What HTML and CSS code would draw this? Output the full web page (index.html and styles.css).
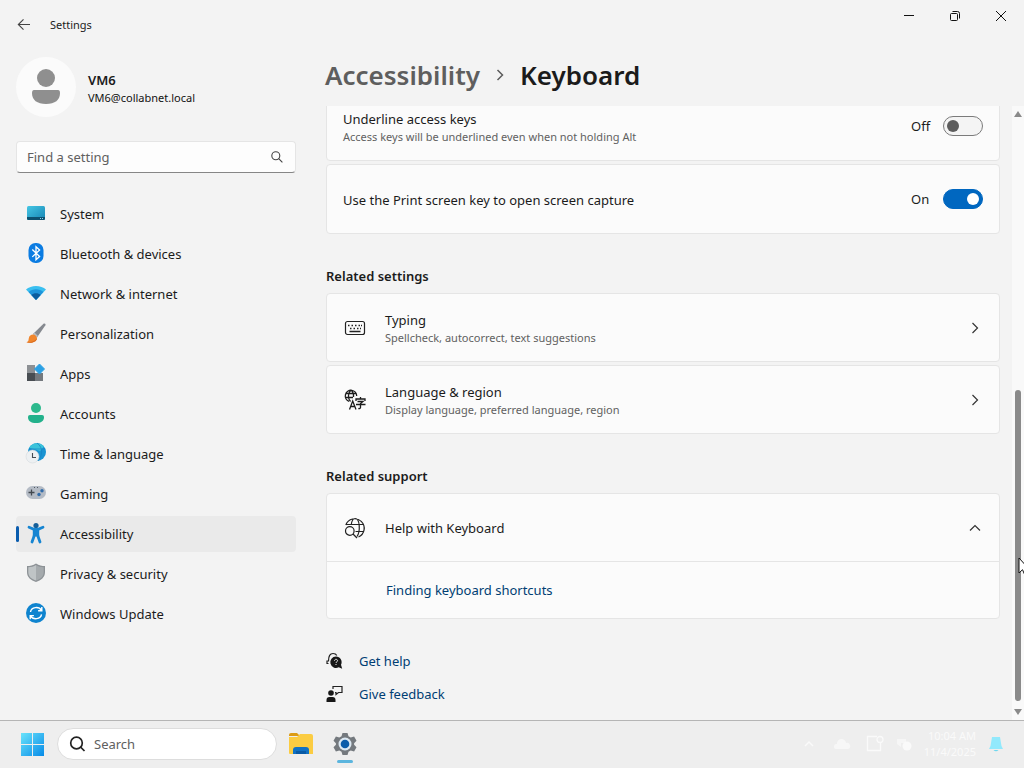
FILE: index.html
```html
<!DOCTYPE html>
<html lang="en">
<head>
<meta charset="utf-8">
<meta name="viewport" content="width=device-width, initial-scale=1">
<title>Settings</title>
<link rel="stylesheet" href="styles.css">
</head>
<body class="desktop">
<div class="window">
  <aside class="sidebar">
    <header class="titlebar">
      <button class="back" type="button" aria-label="Back">
        <svg width="14" height="14" viewBox="0 0 14 14" fill="none" stroke="#444" stroke-width="1.1"><path d="M13 6.500H1.500M6.500 1.300L1.300 6.500l5.200 5.200"/></svg>
      </button>
      <span class="app-name">Settings</span>
    </header>
    <a class="profile" href="#profile">
      <svg class="avatar" viewBox="0 0 60 60"><circle cx="30" cy="30" r="30" fill="#fbfbfb"/><circle cx="30" cy="21" r="9" fill="#8f8f8f"/><path d="M18 33h24q2 0 2 3c0 7-5 11-14 11s-14-4-14-11q0-3 2-3z" fill="#8f8f8f"/></svg>
      <span class="profile-text"><strong class="profile-name">VM6</strong><span class="profile-mail">VM6@collabnet.local</span></span>
    </a>
    <form class="find">
      <input class="find-input" type="text" aria-label="Find a setting" placeholder="Find a setting">
      <svg width="12" height="12" viewBox="0 0 12 12" fill="none" stroke="#444" stroke-width="1.1"><circle cx="4.8" cy="4.8" r="4"/><path d="M7.700 7.700l3.700 3.700"/></svg>
    </form>
    <nav class="nav">
      <a class="nav-item" href="#system"><svg class="nav-icon" viewBox="0 0 20 20"><defs><linearGradient id="sys" x1="0" y1="0" x2="1" y2="1"><stop offset="0" stop-color="#45c6e4"/><stop offset="1" stop-color="#1685b4"/></linearGradient></defs><rect x="1" y="2" width="18" height="14" rx="1.500" fill="url(#sys)"/><path d="M1 13h18v1.500a1.500 1.500 0 0 1-1.500 1.500h-15A1.500 1.500 0 0 1 1 14.500z" fill="#0d5170"/><path d="M14 14.500h1m1 0h1" stroke="#8ed5ef"/></svg>System</a>
      <a class="nav-item" href="#bluetooth"><svg class="nav-icon" viewBox="0 0 20 20"><rect x="2.500" y="-1" width="15" height="20" rx="7" fill="#0b7ce2"/><path d="M6.300 5.500l7.300 7L10 15.700v-13l3.600 3.200-7.300 7" fill="none" stroke="#fff" stroke-width="1.300"/></svg>Bluetooth &amp; devices</a>
      <a class="nav-item" href="#network"><svg class="nav-icon" viewBox="0 0 20 20"><path d="M0 5.500C5 .8 15 .8 20 5.500L10 16z" fill="#39bff0"/><path d="M2.600 8.100c4-3.800 10.800-3.800 14.800 0L10 16z" fill="#1e94db"/><path d="M5.300 11c2.500-2.300 6.900-2.300 9.400 0L10 16z" fill="#0b5c9e"/></svg>Network &amp; internet</a>
      <a class="nav-item" href="#personalization"><svg class="nav-icon" viewBox="0 0 20 20"><path d="M7 10L17.500-.3c1.300-.8 2.500.1 1.900 1.500L11 13.500z" fill="#85898f"/><path d="M7 10l1.500-1.400 3.500 3.400-1 1.500z" fill="#b7bcc2"/><path d="M7 10.500c2 .1 4 1.900 4 3.700 0 3.500-6 5.800-10.500 4 2.300-.9 1.900-2 2.300-4 .4-2.400 2.200-3.700 4.200-3.700z" fill="#f0862d"/><path d="M.5 18.200c4.500 1.800 10.500-.5 10.500-4-2 3-5 3.800-10.500 4z" fill="#d96a1e"/></svg>Personalization</a>
      <a class="nav-item" href="#apps"><svg class="nav-icon" viewBox="0 0 20 20"><path d="M1 1h8v8H1z" fill="#8c9094"/><path d="M1 9h8v8H1z" fill="#484d52"/><path d="M9 9h8v8H9z" fill="#74797e"/><path d="M13.500 0l5 5-5 5-5-5z" fill="#2ba0e4" stroke="#2ba0e4" stroke-linejoin="round"/></svg>Apps</a>
      <a class="nav-item" href="#accounts"><svg class="nav-icon" viewBox="0 0 20 20"><circle cx="10" cy="4" r="5" fill="#2cb98d"/><path d="M4 11h12a2 2 0 0 1 2 2c0 4-3 6-8 6s-8-2-8-6a2 2 0 0 1 2-2z" fill="#22b18b"/></svg>Accounts</a>
      <a class="nav-item" href="#time"><svg class="nav-icon" viewBox="0 0 20 20"><circle cx="11" cy="8" r="9" fill="#1a94d2"/><path d="M3 4C6-2 14-2 18 2.500L14 7 8 5z" fill="#3bc3da"/><path d="M11-1c7 5 5 13 1 18M3 5h16" fill="none" stroke="#1583c4" stroke-width=".7"/><circle cx="6.500" cy="12.500" r="6.500" fill="#edf0f2" stroke="#cfd4d8" stroke-width=".5"/><path d="M6.500 9v4.500H10" fill="none" stroke="#454b52" stroke-width="1.100"/></svg>Time &amp; language</a>
      <a class="nav-item" href="#gaming"><svg class="nav-icon" viewBox="0 0 20 20"><rect y="2" width="20" height="13" rx="6.500" fill="#b4bbc5"/><path d="M5.500 5.500v6M2.500 8.500h6" stroke="#42484f" stroke-width="1.300"/><circle cx="13" cy="10.500" r="1.700" fill="#326caa"/><circle cx="16" cy="6.800" r="1.700" fill="#326caa"/><path d="M8 3.500h1m2 0h1" stroke="#535a62"/></svg>Gaming</a>
      <a class="nav-item nav-item-active" href="#accessibility" aria-current="page"><svg class="nav-icon" viewBox="0 0 20 20"><circle cx="10" cy="1.500" r="2.600" fill="#155f99"/><path d="M3 3.300l5 2h4l5-2M8.500 11L6 18M11.500 11l2.500 7" fill="none" stroke="#1685d2" stroke-width="2.800" stroke-linecap="round"/><path d="M6.800 5h6.400v7.500H6.800z" fill="#1685d2"/></svg>Accessibility</a>
      <a class="nav-item" href="#privacy"><svg class="nav-icon" viewBox="0 0 20 20"><path d="M10-.5C7 1.500 4 2 1 2v6c0 5.500 4 8.200 9 10 5-1.800 9-4.500 9-10V2c-3 0-6-.5-9-2.500z" fill="#8d9296"/><path d="M10 1C8 2.500 5 3.200 2.300 3.200V8c0 5 3.700 7.200 7.700 8.600z" fill="#bfc4c6"/><path d="M10 1c2 1.500 5 2.200 7.700 2.200V8c0 5-3.700 7.200-7.700 8.600z" fill="#a5aaad"/></svg>Privacy &amp; security</a>
      <a class="nav-item" href="#update"><svg class="nav-icon" viewBox="0 0 20 20"><circle cx="10" cy="9" r="10" fill="#0f84cf"/><path d="M4.500 8c.8-5 8.200-6 11-1.700M15.800 3v3.700h-3.700M15.500 10.300c-.8 5-8.200 6-11 1.700M4.200 15.300v-3.700h3.700" fill="none" stroke="#fff" stroke-width="1.400"/></svg>Windows Update</a>
    </nav>
  </aside>

  <main class="main">
    <div class="window-controls">
      <button class="window-button" type="button" aria-label="Minimize"><svg width="12" height="12" viewBox="0 0 12 12"><path d="M1 5.500h10" stroke="#111"/></svg></button>
      <button class="window-button" type="button" aria-label="Restore"><svg width="12" height="12" viewBox="0 0 12 12" fill="none" stroke="#111"><rect x="1.500" y="3.500" width="7" height="7" rx="1"/><path d="M3.500 1.500h5a2 2 0 0 1 2 2v5"/></svg></button>
      <button class="window-button" type="button" aria-label="Close"><svg width="12" height="12" viewBox="0 0 12 12"><path d="M1 1l10 10M11 1L1 11" stroke="#111"/></svg></button>
    </div>
    <h1 class="breadcrumb">
      <a class="crumb" href="#accessibility">Accessibility</a>
      <svg width="8" height="12" viewBox="0 0 8 12" fill="none" stroke="#5c5c5c" stroke-width="1.500"><path d="M1.500 1l5 5-5 5"/></svg>
      <span>Keyboard</span>
    </h1>
    <div class="viewport">
      <div class="content">
        <div class="card card-setting card-clipped">
          <label class="text" for="underline"><span>Underline access keys</span><small class="note">Access keys will be underlined even when not holding Alt</small></label>
          <span class="state">Off</span><input class="toggle" id="underline" type="checkbox" role="switch">
        </div>
        <div class="card card-setting">
          <label class="text" for="printscreen">Use the Print screen key to open screen capture</label>
          <span class="state">On</span><input class="toggle" id="printscreen" type="checkbox" role="switch" checked>
        </div>

        <h2 class="section-title">Related settings</h2>
        <a class="card" href="#typing">
          <svg class="card-icon" width="22" height="22" viewBox="0 0 22 22" fill="none" stroke="#222"><rect x="1.500" y="4.500" width="19" height="13" rx="2" stroke-width="1.200"/><path d="M4 8.500h1.500m2 0H9m2 0h1.500m2 0H16m1 0h1M6 11.500h1.500m2 0H11m2 0h1.500m1.500 0h1M5.500 14.500h11" stroke-width="1.300"/></svg>
          <span class="text"><span>Typing</span><small class="note">Spellcheck, autocorrect, text suggestions</small></span>
          <svg class="chevron" width="16" height="16" viewBox="0 0 16 16" fill="none" stroke="#333" stroke-width="1.200"><path d="M5.500 3l5 5-5 5"/></svg>
        </a>
        <a class="card" href="#language">
          <svg class="card-icon" width="22" height="22" viewBox="0 0 22 22" fill="none" stroke="#1c1c1c" stroke-width="1.300"><path d="M5 12.300A5.700 5.700 0 1 1 12.700 7M1.500 4.500h11M1.200 8.500H9M7 1c-3.300 3-3.300 8.500-.5 11.500M7 1c2.300 2 2.700 4.500 2.500 7"/><path d="M5.500 20.500L8.700 12l3.300 8.500M6.500 17.500h4.500M16.500 8v2M12 12v-2h9v2M13.500 12.500H19l-2.500 2v4q0 1.200-2.200 1M12 15.500h9.500"/></svg>
          <span class="text"><span>Language &amp; region</span><small class="note">Display language, preferred language, region</small></span>
          <svg class="chevron" width="16" height="16" viewBox="0 0 16 16" fill="none" stroke="#333" stroke-width="1.200"><path d="M5.500 3l5 5-5 5"/></svg>
        </a>

        <h2 class="section-title">Related support</h2>
        <section class="expander">
          <button class="card card-head" type="button" aria-expanded="true">
            <svg class="card-icon" width="22" height="22" viewBox="0 0 22 22" fill="none" stroke="#222" stroke-width="1.200"><path d="M1.800 8a9.500 9.500 0 1 1 12.700 12M2.500 7.500h17.500M11.500 14.500h8.500M7.200 8C7.700 4 9.300 1.500 11.200 1.500c4.800 0 5.300 13 1.800 18"/><circle cx="5.800" cy="14" r="4.300"/><path d="M9 17l4 4"/></svg>
            <span class="text">Help with Keyboard</span>
            <svg class="chevron" width="16" height="16" viewBox="0 0 16 16" fill="none" stroke="#333" stroke-width="1.200"><path d="M3 10.500l5-5 5 5"/></svg>
          </button>
          <div class="expander-body"><a class="link" href="#shortcuts">Finding keyboard shortcuts</a></div>
        </section>

        <div class="help-links">
          <a class="link help-link" href="#help"><svg width="18" height="18" viewBox="0 0 18 18"><path d="M2.500 11.500H1V9h1.500C2.500 4 4 1.500 7 1.500c2 0 3.300 1 3.800 2" fill="none" stroke="#222" stroke-width="1.200"/><path d="M10 4.500a5.700 5.700 0 1 0 2.700 10.700l3.500 1.500-1.200-3.900A5.700 5.700 0 0 0 10 4.500z" fill="#171717"/><path d="M8.500 8.700c.2-2 3.200-1.700 3 .1-.1 1.100-1.500 1.100-1.500 2.200m0 1v1" fill="none" stroke="#eee"/></svg>Get help</a>
          <a class="link help-link" href="#feedback"><svg width="18" height="18" viewBox="0 0 18 18"><circle cx="5" cy="8" r="2.800" fill="#171717"/><path d="M.5 17v-2a3 3 0 0 1 3-3h3a3 3 0 0 1 3 3v2z" fill="#171717"/><path d="M7 4V1.500h9v6h-3.500l-2.500 2v-2H9" fill="none" stroke="#222" stroke-width="1.200"/></svg>Give feedback</a>
        </div>
      </div>
      <div class="scrollbar" aria-hidden="true">
        <svg width="8" height="6" viewBox="0 0 8 6"><path d="M4 0l4 6H0z" fill="#8a8a8a"/></svg>
        <div class="track"><div class="thumb"></div></div>
        <svg width="8" height="6" viewBox="0 0 8 6"><path d="M0 0h8L4 6z" fill="#8a8a8a"/></svg>
      </div>
    </div>
  </main>
</div>

<footer class="taskbar">
  <button class="task-button" type="button" aria-label="Start"><svg width="24" height="24" viewBox="0 0 24 24"><defs><linearGradient id="win" x1="0" y1="0" x2="1" y2="1"><stop offset="0" stop-color="#69e3fb"/><stop offset="1" stop-color="#078be8"/></linearGradient></defs><path d="M0 1h11v11H0zM12 1h11v11H12zM0 13h11v11H0zM12 13h11v11H12z" fill="url(#win)"/></svg></button>
  <label class="task-search"><svg width="16" height="16" viewBox="0 0 16 16" fill="none" stroke="#222" stroke-width="1.700"><circle cx="6.500" cy="7" r="5.800"/><path d="M10.500 11l4 4"/></svg><input class="task-input" type="text" aria-label="Search" placeholder="Search"></label>
  <button class="task-button" type="button" aria-label="File Explorer"><svg width="24" height="24" viewBox="0 0 24 24"><path d="M0 3a2 2 0 0 1 2-2h6l3 3H0z" fill="#dc9b14"/><path d="M0 5h8l3-3h11a2 2 0 0 1 2 2v18H1a1 1 0 0 1-1-1z" fill="#fbcc42"/><path d="M4 22v-4a3 3 0 0 1 3-3h10a3 3 0 0 1 3 3v4z" fill="#1172c4"/><path d="M7 22v-3h10v3z" fill="#0a5ba6"/></svg></button>
  <button class="task-button task-button-open" type="button" aria-label="Settings"><svg width="24" height="24" viewBox="0 0 24 24"><path d="M9.500 1h5l1 3.300 2.200 1.300 3.400-1 2.400 4.200-2.400 2.500v1.400l2.400 2.500-2.400 4.200-3.400-1-2.200 1.300-1 3.300h-5l-1-3.300-2.200-1.300-3.400 1L.5 15.200l2.400-2.500v-1.400L.5 8.800l2.400-4.200 3.400 1 2.200-1.300z" fill="#74797e"/><circle cx="12" cy="12" r="6.500" fill="#dce8f2"/><circle cx="12" cy="12" r="4.300" fill="#0b5caa"/></svg></button>
  <div class="tray">
    <svg width="10" height="6" viewBox="0 0 10 6" fill="none" stroke="#fafafa" stroke-width="1.500"><path d="M1 5l4-4 4 4"/></svg>
    <svg class="cloud" width="16" height="10" viewBox="0 0 16 10"><path d="M2 10a2.500 2.500 0 0 1 1-5 4.500 4.500 0 0 1 9-1 3 3 0 0 1 2 6z" fill="#f7f7f7"/></svg>
    <svg width="18" height="18" viewBox="0 0 18 18" fill="none" stroke="#fafafa" stroke-width="1.300"><path d="M11 1.500H1.500v14h13V8"/><circle cx="14" cy="4.500" r="3"/></svg>
    <svg width="16" height="16" viewBox="0 0 16 16"><path d="M1 3h9v4H5v4L1 8z" fill="#f6f6f6"/><circle cx="11" cy="10" r="4.500" fill="#fafafa"/></svg>
    <time class="clock"><span>10:04 AM</span><span>11/4/2025</span></time>
    <svg width="16" height="18" viewBox="0 0 16 18"><path d="M4 2h8l1.500 9 1.500 3H1l1.500-3z" fill="#92e9fc"/><path d="M5.500 15h5q-2.500 2.500-5 0z" fill="#6ed8ef"/></svg>
  </div>
</footer>
<svg class="pointer" width="12" height="20" viewBox="0 0 12 20"><path d="M1 1v15l3.500-3.300 2.300 5.300 2.200-1-2.300-5H11z" fill="#fff" stroke="#111"/></svg>
</body>
</html>
```
FILE: styles.css
```css
* { box-sizing: border-box; }
.desktop {
  margin: 0; height: 100vh; display: flex; flex-direction: column;
  position: relative; overflow: hidden; background: #f3f3f3; color: #1b1b1b;
  font: 13px/20px "Noto Sans", "Open Sans", sans-serif;
}
button, input { font: inherit; color: inherit; }
button { border: 0; padding: 0; background: none; }
a { color: inherit; text-decoration: none; }
svg { flex: none; display: block; overflow: visible; }

.window { flex: 1; min-height: 0; display: flex; border-bottom: 1px solid #b5b5b5; }
.sidebar { flex: 0 0 312px; padding: 0 16px; }
.titlebar { height: 49px; display: flex; align-items: center; gap: 18px; }
.back { width: 16px; height: 16px; display: grid; place-items: center; }
.app-name { font-size: 11px; }
.profile { display: flex; align-items: center; gap: 12px; margin-top: 8px; }
.avatar { width: 60px; height: 60px; }
.profile-text { display: flex; flex-direction: column; padding-top: 4px; }
.profile-name { font-weight: 600; line-height: 18px; }
.profile-mail { font-size: 11px; line-height: 18px; color: #111; }
.find {
  height: 32px; margin: 24px 0 23px; padding: 0 12px 0 10px; display: flex; align-items: center;
  background: #fdfdfd; border: 1px solid #e5e5e5; border-bottom-color: #868686; border-radius: 4px;
}
.find-input, .task-input { flex: 1; min-width: 0; border: 0; padding: 0; background: none; outline: 0; }
.find-input::placeholder, .task-input::placeholder { color: #606060; opacity: 1; }
.nav { display: grid; gap: 4px; }
.nav-item { height: 36px; padding-left: 10px; display: flex; align-items: center; gap: 14px; border-radius: 4px; position: relative; }
.nav-item-active { background: #eaeaea; }
.nav-item-active::before { content: ""; position: absolute; left: 0; top: 10px; width: 3px; height: 16px; border-radius: 2px; background: #0a5cae; }
.nav-icon { width: 20px; height: 20px; }

.main { flex: 1; min-width: 0; display: flex; flex-direction: column; }
.window-controls { display: flex; justify-content: flex-end; height: 32px; }
.window-button { width: 46px; display: grid; place-items: center; }
.breadcrumb { margin: 0; height: 74px; padding: 12px 0 0 13px; display: flex; align-items: center; gap: 16px; font-size: 26px; font-weight: 600; line-height: 36px; }
.crumb { color: #5e5e5e; }
.viewport { flex: 1; min-height: 0; display: flex; overflow: hidden; }
.content { flex: 1; min-width: 0; padding: 0 12px 0 14px; }
.card {
  width: 100%; min-height: 69px; margin-bottom: 3px; padding: 0 16px; display: flex; align-items: center;
  text-align: left; background: #fbfbfb; border: 1px solid #e5e5e5; border-radius: 4px;
}
.card-setting { min-height: 70px; }
.card-setting .text { padding-top: 2px; }
.card-clipped { margin-top: -15px; }
.text { flex: 1; display: flex; flex-direction: column; }
.note { font-size: 11px; line-height: 16px; color: #616161; }
.state { width: 32px; }
.card-icon { margin: 0 19px 0 1px; }
.toggle { appearance: none; width: 40px; height: 20px; margin: 0; padding: 3px; display: flex; border: 1px solid #7b7b7b; border-radius: 10px; background: #f4f4f4; }
.toggle::before { content: ""; width: 12px; height: 12px; border-radius: 50%; background: #5d5d5d; }
.toggle:checked { justify-content: flex-end; background: #0067c0; border-color: #0067c0; }
.toggle:checked::before { background: #fff; }
.section-title { margin: 32px 0 7px; font-size: 13px; font-weight: 600; line-height: 20px; }
.expander { background: #fbfbfb; border: 1px solid #e5e5e5; border-radius: 4px; }
.card-head { min-height: 68px; margin: 0; border-width: 0 0 1px; border-radius: 0; background: none; }
.expander-body { padding: 18px 59px; }
.link { color: #003e73; }
.help-links { margin-top: 32px; display: grid; justify-items: start; gap: 13px; }
.help-link { display: flex; align-items: center; gap: 15px; }

.scrollbar { flex: 0 0 12px; padding: 5px 0; display: flex; flex-direction: column; align-items: center; gap: 8px; background: #f9f9f9; }
.track { flex: 1; width: 6px; display: flex; flex-direction: column; justify-content: flex-end; }
.thumb { height: 54%; border-radius: 3px; background: #8a8a8a; }

.taskbar { flex: 0 0 47px; padding: 0 20px 2px 21px; display: flex; align-items: center; background: #eee; }
.task-button { width: 24px; height: 24px; position: relative; }
.task-search { width: 220px; height: 32px; margin: 0 12px; padding: 0 12px; display: flex; align-items: center; gap: 8px; border: 1px solid #ddd; border-radius: 16px; background: #fff; }
.task-button-open { margin-left: 20px; }
.task-button-open::after { content: ""; position: absolute; left: 4px; top: 28px; width: 16px; height: 3px; border-radius: 2px; background: #5bb5de; }
.tray { margin-left: auto; display: flex; align-items: center; gap: 12px; }
.cloud { margin: 0 4px 0 8px; }
.clock { display: flex; flex-direction: column; align-items: flex-end; font-size: 11px; line-height: 16px; color: #fafafa; }
.pointer { position: absolute; left: 1018px; top: 557px; }
```
